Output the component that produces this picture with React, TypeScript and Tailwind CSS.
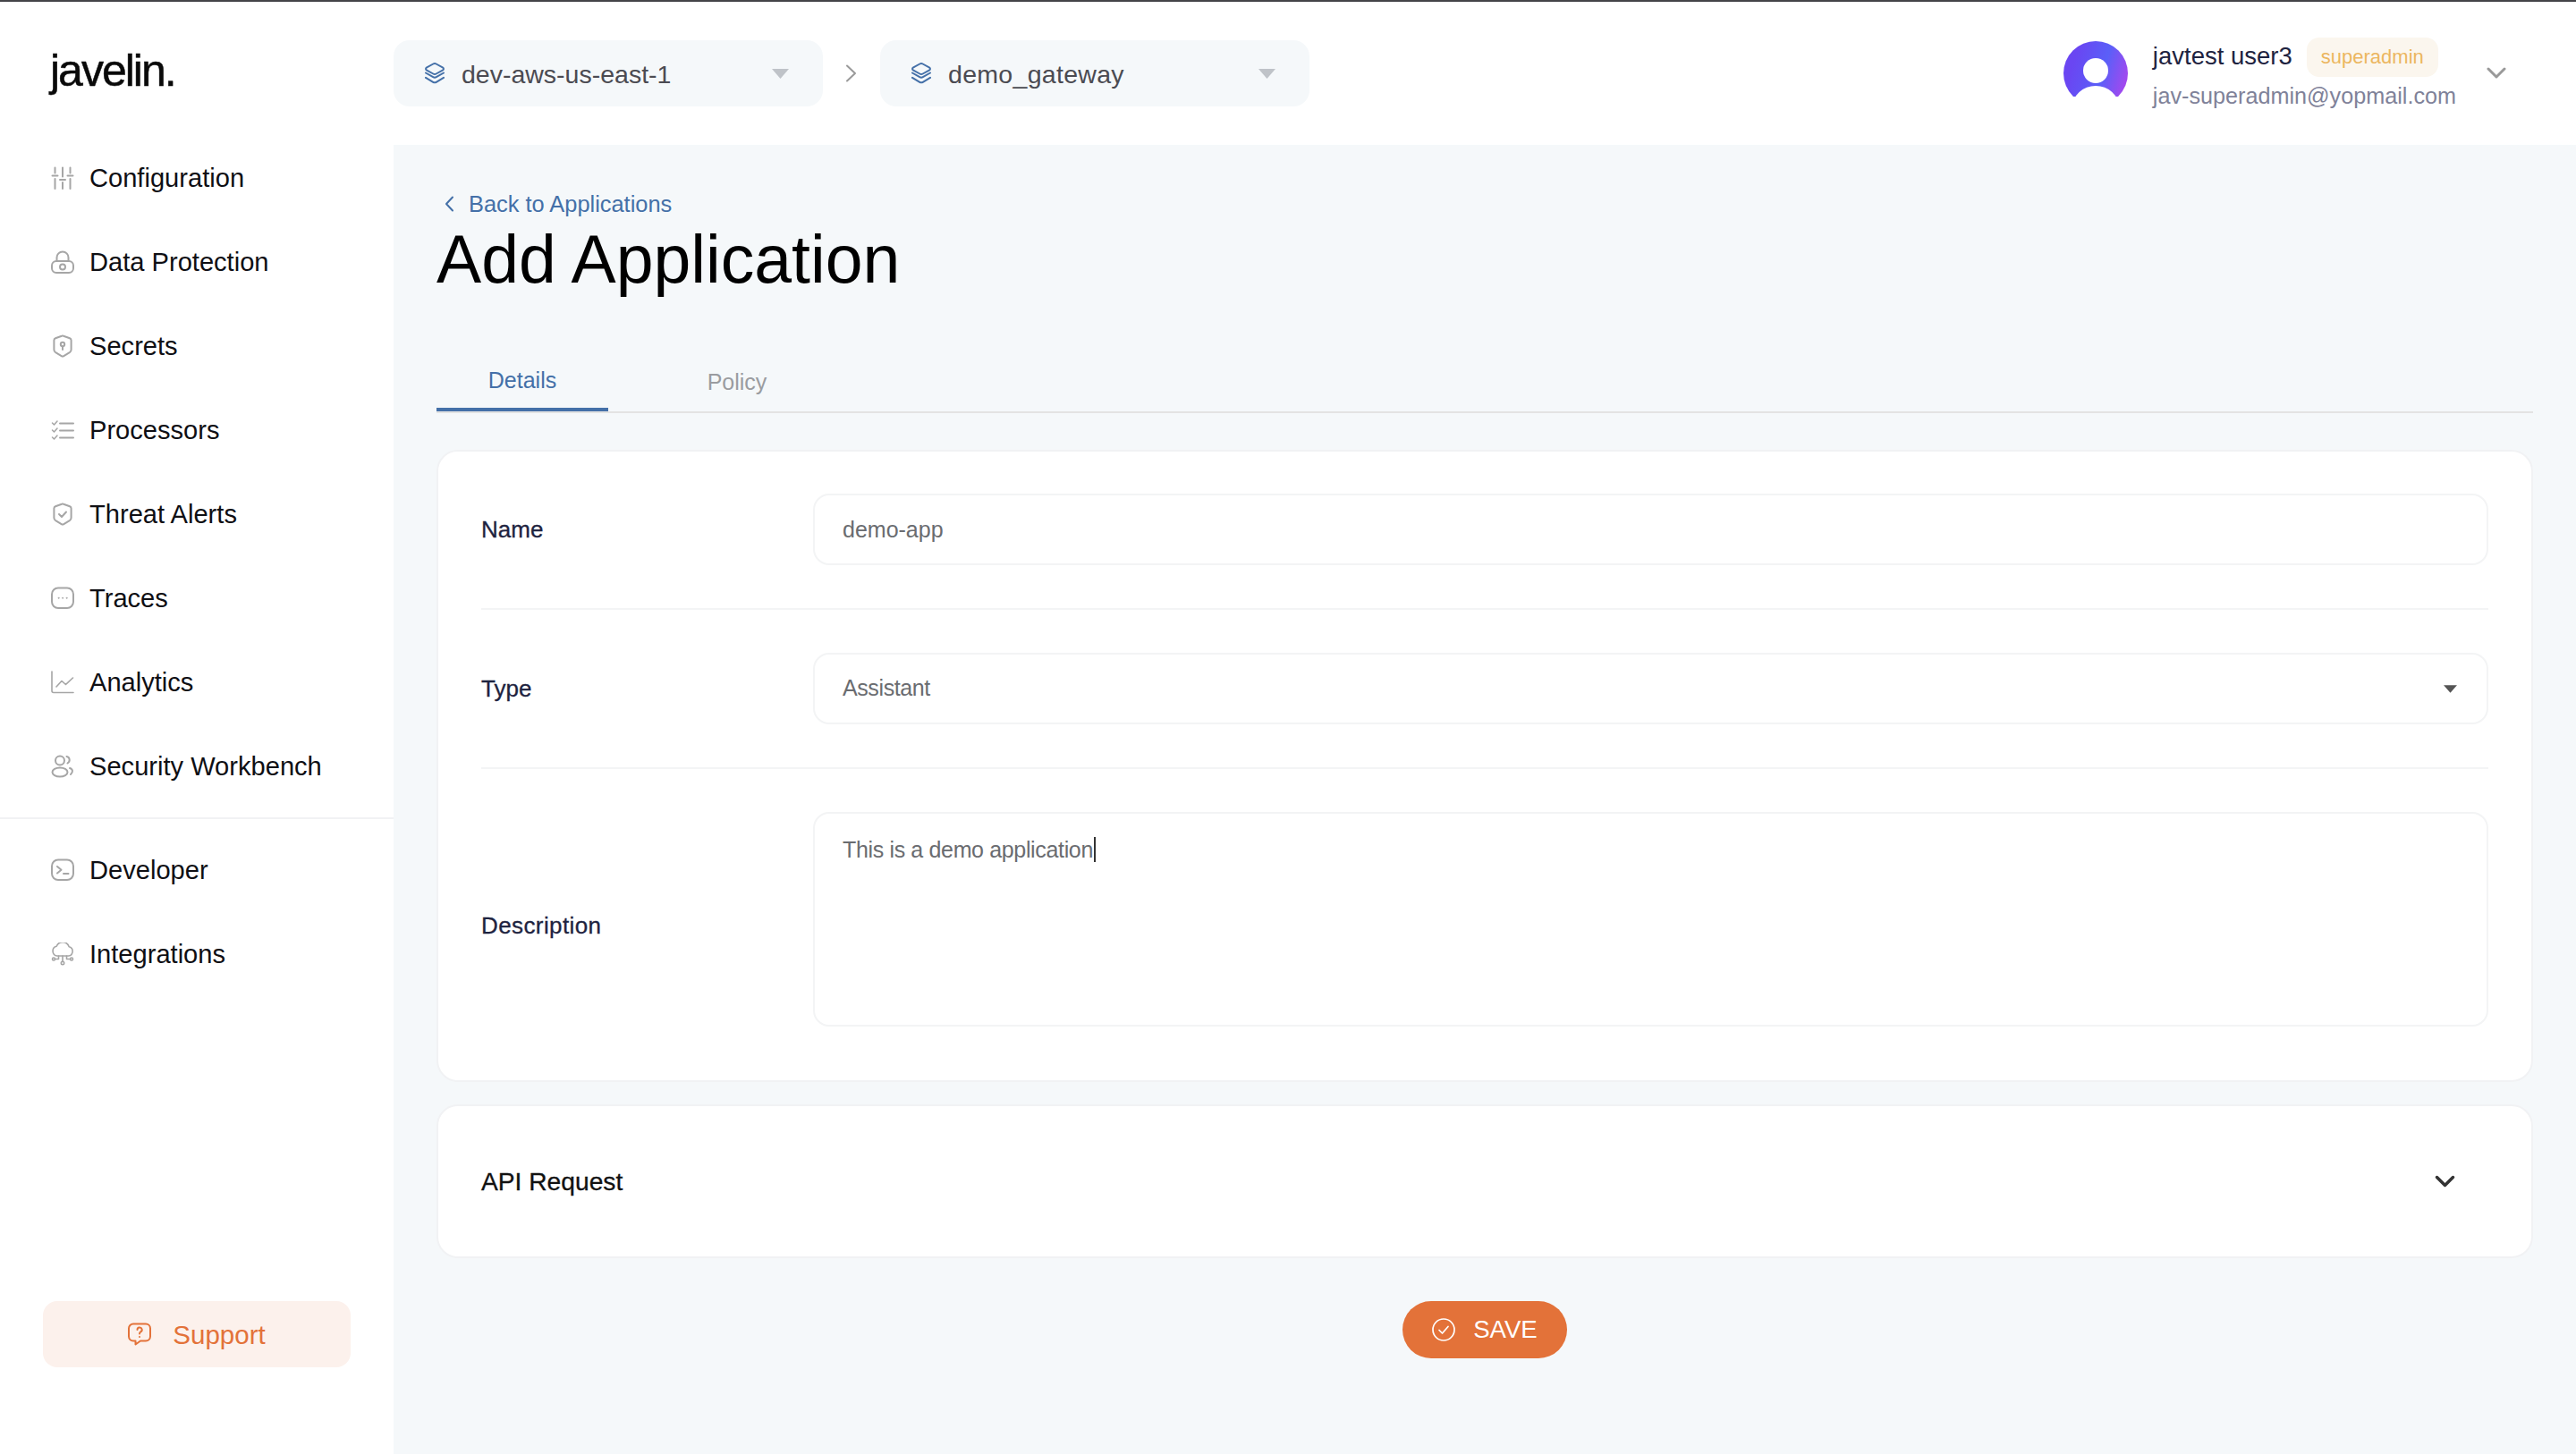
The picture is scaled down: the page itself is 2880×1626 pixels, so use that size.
import React from "react";

const I = ({ children, w = 26, h = 26, c = "#a6a6a6", sw = 2, className = "" }: { children: React.ReactNode; w?: number; h?: number; c?: string; sw?: number; className?: string }) => (
  <svg width={w} height={h} viewBox={`0 0 ${w} ${h}`} fill="none" stroke={c} strokeWidth={sw} strokeLinecap="round" strokeLinejoin="round" className={`shrink-0 ${className}`}>
    {children}
  </svg>
);

const shield = "M12 1.700a2.500 2.500 0 0 1 2 0l7 2.600a2.500 2.500 0 0 1 1.600 2.300v10.300a4 4 0 0 1-1.800 3.300l-6.500 3.900a2.500 2.500 0 0 1-2.600 0l-6.500-3.900a4 4 0 0 1-1.800-3.300V6.600a2.500 2.500 0 0 1 1.600-2.300z";

const nav1: [string, React.ReactNode][] = [
  ["Configuration", <I key="a"><path d="M4.500 1.500v6M4.500 14v11M13 1.500v10M13 18v7M21.500 1.500v6M21.500 14v11M1.500 10.500h6M10 15h6M18.500 10.500h6" /></I>],
  ["Data Protection", <I key="b"><rect x="1" y="12" width="24" height="13" rx="5" /><path d="M6.500 12V8a6.500 6.500 0 0 1 13 0v4" /><circle cx="13" cy="18.500" r="3" /></I>],
  ["Secrets", <I key="c"><path d={shield} /><circle cx="13" cy="11" r="2.200" /><path d="M13 13.500v3.500" /></I>],
  ["Processors", <I key="d"><path d="M10 5.500h15M10 13.500h15M10 21.500h15" /><path d="M1.500 5l2 2 3.500-4M1.500 13l2 2 3.500-4M1.500 21l2 2 3.500-4" strokeWidth="1.500" /></I>],
  ["Threat Alerts", <I key="e"><path d={shield} /><path d="M9 13l3 3 5-5.500" /></I>],
  ["Traces", <I key="f"><rect x="1" y="1.500" width="24" height="22.500" rx="7" /><circle cx="8.500" cy="12.800" r="0.500" strokeWidth="1" /><circle cx="13" cy="12.800" r="0.500" strokeWidth="1" /><circle cx="17.500" cy="12.800" r="0.500" strokeWidth="1" /></I>],
  ["Analytics", <I key="g"><path d="M1 1v21.500a2 2 0 0 0 2 2h22" strokeWidth="1.600" /><path d="M6 18l6-6.500 4.500 4L24.500 8" strokeWidth="1.600" /></I>],
  ["Security Workbench", <I key="h"><circle cx="10" cy="6.500" r="5" /><ellipse cx="10" cy="19.500" rx="8.500" ry="5" /><path d="M17.500 2c3.500.5 4.500 5.500 1 7.500M21 15c3.500 1 4 4.500 1 7" /></I>],
];

const nav2: [string, React.ReactNode][] = [
  ["Developer", <I key="i"><rect x="1" y="1.500" width="24" height="22.500" rx="7" /><path d="M7 9l4.500 3.800L7 16.500M14 17h5.500" /></I>],
  ["Integrations", <I key="j"><path d="M7 15a5.500 5.500 0 0 1-.8-10.800 7.500 7.500 0 0 1 14 .6 5.200 5.200 0 0 1-.7 10.200z" strokeWidth="1.600" /><path d="M13 15v6.500M8.500 15v3.500H4.500M17.500 15v3.500H21.500" strokeWidth="1.600" /><circle cx="3" cy="18.500" r="1.500" strokeWidth="1.600" /><circle cx="23" cy="18.500" r="1.500" strokeWidth="1.600" /><circle cx="13" cy="23" r="1.700" strokeWidth="1.600" /></I>],
];

const NavItem = ({ label, icon }: { label: string; icon: React.ReactNode }) => (
  <div className="flex h-[94px] items-center gap-[17px] pl-[57px] text-[29.100px] text-[#0f0f14]">
    {icon}
    <span className="pt-[2px]">{label}</span>
  </div>
);

const Layers = () => (
  <I w={24} h={24} c="#4470a8" sw={2}>
    <path d="M10.300 1.500a3.500 3.500 0 0 1 3.400 0l7.500 4.200a1.500 1.500 0 0 1 0 2.600l-7.500 4.200a3.500 3.500 0 0 1-3.400 0L2.800 8.300a1.500 1.500 0 0 1 0-2.600z" />
    <path d="M2 11.500l8.200 4.700a3.500 3.500 0 0 0 3.600 0L22 11.500M2 16.800l8.200 5a3.500 3.500 0 0 0 3.600 0l8.200-5" />
  </I>
);

const Caret = ({ c = "#bfc3c8", w = 19, h = 11 }: { c?: string; w?: number; h?: number }) => (
  <svg width={w} height={h} viewBox="0 0 19 11" className="shrink-0"><path d="M0 0h19L9.500 11z" fill={c} /></svg>
);

const Selector = ({ label, textClass = "" }: { label: string; textClass?: string }) => (
  <div className="flex h-[74px] w-[480px] items-center justify-between rounded-[18px] bg-[#f5f8fa] pl-[34px] pr-[38px]">
    <div className="flex items-center gap-[18px] text-[28.500px] text-[#4b4b52]">
      <Layers />
      <span className={`pt-[2px] ${textClass}`}>{label}</span>
    </div>
    <Caret />
  </div>
);

const Avatar = () => (
  <svg width="72" height="72" viewBox="0 0 72 72" className="shrink-0">
    <defs>
      <linearGradient id="av" x1="0.1" y1="0.5" x2="0.95" y2="0.75">
        <stop offset="0" stopColor="#6a46f2" />
        <stop offset="0.55" stopColor="#5a5ff8" />
        <stop offset="1" stopColor="#a548ee" />
      </linearGradient>
    </defs>
    <circle cx="36" cy="36" r="36" fill="url(#av)" />
    <circle cx="36" cy="33" r="14" fill="#fff" />
    <ellipse cx="36" cy="74" rx="26" ry="24" fill="#fff" />
    <rect x="0" y="62" width="72" height="10" fill="#fff" />
  </svg>
);

const Row = ({ label, children, labelClass = "" }: { label: string; children: React.ReactNode; labelClass?: string }) => (
  <div className="flex items-center">
    <div className={`w-[371px] shrink-0 text-[26px] text-[#1e2340] [-webkit-text-stroke:0.3px_#1e2340] ${labelClass}`}>{label}</div>
    {children}
  </div>
);

const Divider = () => <div className="my-[48px] h-[2px] bg-[#f3f4f5]" />;

export default function App() {
  return (
    <div className="flex h-[1626px] w-[2880px] overflow-hidden border-t-2 border-[#444448] bg-white [font-family:'Liberation_Sans',Arial,sans-serif]">
      <aside className="flex w-[440px] shrink-0 flex-col pb-[97px]">
        <div className="flex h-[150px] shrink-0 items-center pl-[56px] pt-[4px] text-[50px] tracking-[-2px] text-[#0a0a0a] [-webkit-text-stroke:0.5px_#0a0a0a]">javelin.</div>
        {nav1.map(([l, ic]) => <NavItem key={l} label={l} icon={ic} />)}
        <div className="mb-[10px] mt-[10px] h-[2px] bg-[#f1f2f4]" />
        {nav2.map(([l, ic]) => <NavItem key={l} label={l} icon={ic} />)}
        <div className="mx-[48px] mt-auto flex h-[74px] items-center justify-center gap-[24px] rounded-[16px] bg-[#fcf1ec] text-[29.500px] text-[#e37239]">
          <I c="#e37239" sw={2}>
            <path d="M6 1.500h14a5 5 0 0 1 5 5v9a5 5 0 0 1-5 5h-6l-5.500 4v-4H6a5 5 0 0 1-5-5v-9a5 5 0 0 1 5-5z" />
            <path d="M10.500 8a2.600 2.600 0 1 1 3.800 2.400c-.9.500-1.300 1-1.300 2" />
            <path d="M13 16h.01" />
          </I>
          <span className="pt-[3px]">Support</span>
        </div>
      </aside>

      <div className="flex min-w-0 flex-1 flex-col">
        <header className="flex h-[160px] shrink-0 items-center pr-[78px]">
          <Selector label="dev-aws-us-east-1" />
          <div className="flex w-[64px] justify-center">
            <I w={14} h={20} c="#9a9a9a" sw={2}><path d="M2 1.500L11 10 2 18.500" /></I>
          </div>
          <Selector label="demo_gateway" textClass="tracking-[0.3px]" />
          <div className="ml-auto flex items-center">
            <Avatar />
            <div className="ml-[28px] flex flex-col">
              <div className="flex h-[44px] items-center gap-[16px]">
                <span className="pb-[2px] text-[27.500px] text-[#1e2340]">javtest user3</span>
                <span className="flex h-[44px] w-[147px] items-center justify-center rounded-[14px] bg-[#fbf6ee] text-[22px] text-[#ecb660]">superadmin</span>
              </div>
              <div className="mt-[5px] h-[32px] text-[25.200px] leading-[32px] text-[#7f8299]">jav-superadmin@yopmail.com</div>
            </div>
            <div className="ml-[34px]">
              <I w={22} h={14} c="#999999" sw={3}><path d="M2 2l9 9 9-9" /></I>
            </div>
          </div>
        </header>

        <main className="flex flex-1 flex-col bg-[#f5f8fa] px-[48px]">
          <div className="mt-[50px] flex h-[32px] items-center gap-[16px] pl-[9px] text-[25.400px] text-[#4470a8]">
            <I w={11} h={18} c="#4470a8" sw={2}><path d="M9 1.500L2 9l7 7.500" /></I>
            <span className="pt-[1px]">Back to Applications</span>
          </div>
          <h1 className="mt-[4px] h-[84px] text-[75.200px] leading-[84px] font-normal text-black">Add Application</h1>

          <div className="mt-[68px] flex h-[62px] shrink-0 border-b-2 border-[#e3e3e3] text-[25px]">
            <div className="flex h-[60px] w-[192px] items-center justify-center border-b-4 border-[#4470a8] pb-1 text-[#4470a8]">Details</div>
            <div className="flex h-[60px] w-[288px] items-center justify-center pb-1 text-[#9a9ca0]">Policy</div>
          </div>

          <section className="mt-[41px] rounded-[24px] border-2 border-[#f1f2f4] bg-white px-[48px] pb-[60px] pt-[47px]">
            <Row label="Name">
              <div className="flex h-[80px] flex-1 items-center rounded-[18px] border-2 border-[#f3f4f5] px-[31px] pt-[2px] text-[25px] text-[#6a6c70]">demo-app</div>
            </Row>
            <Divider />
            <Row label="Type">
              <div className="flex h-[80px] flex-1 items-center justify-between rounded-[18px] border-2 border-[#f3f4f5] pl-[31px] pr-[33px] text-[25px] text-[#6a6c70]">
                <span className="tracking-[-0.4px]">Assistant</span>
                <Caret c="#555555" w={15} h={9} />
              </div>
            </Row>
            <Divider />
            <Row label="Description" labelClass="pt-[14px] tracking-[0.4px]">
              <div className="h-[240px] flex-1 rounded-[18px] border-2 border-[#f3f4f5] px-[31px] pt-[24px] text-[25px] leading-[32px] tracking-[-0.35px] text-[#6a6c70]">
                <span className="border-r-2 border-[#333333] pr-px">This is a demo application</span>
              </div>
            </Row>
          </section>

          <section className="mt-[25px] flex h-[172px] shrink-0 items-center justify-between rounded-[24px] border-2 border-[#f1f2f4] bg-white pl-[48px] pr-[85px]">
            <span className="pt-[1px] text-[28.200px] text-[#111111] [-webkit-text-stroke:0.3px_#111111]">API Request</span>
            <I w={23} h={15} c="#333333" sw={3.5}><path d="M2.500 2.500l9 9 9-9" /></I>
          </section>

          <div className="mt-[48px] flex justify-center">
            <button className="flex h-[64px] w-[184px] items-center justify-center gap-[20px] rounded-full bg-[#e37239] text-[27.600px] text-white">
              <I c="#ffffff" sw={1.700}>
                <circle cx="13" cy="13" r="12" />
                <path d="M8 13.500l3.500 3.500 6.500-7.500" />
              </I>
              <span>SAVE</span>
            </button>
          </div>
        </main>
      </div>
    </div>
  );
}
